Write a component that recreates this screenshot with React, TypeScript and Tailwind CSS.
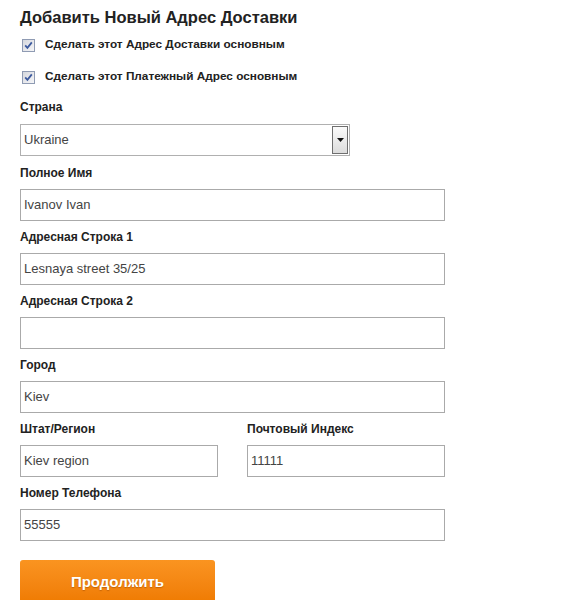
const font = { fontFamily: '"Liberation Sans", Arial, sans-serif' };

function CheckIcon() {
  return (
    <svg width="13" height="13" viewBox="0 0 13 13" className="shrink-0">
      <defs>
        <linearGradient id="cbg" x1="0" y1="0" x2="1" y2="1">
          <stop offset="0" stopColor="#d4d6dc" />
          <stop offset="1" stopColor="#f7f7f9" />
        </linearGradient>
      </defs>
      <rect x="0.5" y="0.5" width="12" height="12" fill="url(#cbg)" stroke="#8f9bb3" />
      <path d="M3.2 6.4 L5.4 8.8 L9.8 3.4" fill="none" stroke="#3d5a9e" strokeWidth="1.8" />
    </svg>
  );
}

function CheckRow({ label }: { label: string }) {
  return (
    <div className="flex h-4 items-center pl-[2px]">
      <CheckIcon />
      <span className="ml-[10px] text-[11.8px] font-bold text-[#222]">{label}</span>
    </div>
  );
}

function Field({
  label,
  value,
  width = "w-[425px]",
}: {
  label: string;
  value: string;
  width?: string;
}) {
  return (
    <div className="mb-[8px] flex flex-col">
      <div className="mb-[8px] h-4 text-[12px] font-bold leading-4 text-[#222]">{label}</div>
      <div
        className={`${width} flex h-8 items-center border border-[#aaaaaa] bg-white pl-[3px] text-[13px] text-[#444]`}
      >
        {value}
      </div>
    </div>
  );
}

export default function App() {
  return (
    <div className="min-h-[600px] bg-white pl-5 pt-[6px]" style={font}>
      <h1 className="h-[22px] text-[16.5px] font-bold leading-[22px] text-[#222]">
        Добавить Новый Адрес Доставки
      </h1>
      <div className="mt-[9px] flex flex-col gap-4">
        <CheckRow label="Сделать этот Адрес Доставки основным" />
        <CheckRow label="Сделать этот Платежный Адрес основным" />
      </div>

      <div className="mt-[14px] mb-[9px] flex flex-col">
        <div className="mb-[9px] h-4 text-[12px] font-bold leading-4 text-[#222]">Страна</div>
        <div className="flex h-8 w-[330px] items-center border border-[#b0b0b0] bg-white pl-[3px] pr-[1px] text-[13px] text-[#444]">
          <span className="flex-1">Ukraine</span>
          <div className="flex h-[28px] w-4 items-center justify-center border border-[#6f6f6f] bg-gradient-to-b from-[#fbfbfb] to-[#dcdcdc]">
            <svg width="7" height="4" viewBox="0 0 7 4">
              <path d="M0 0 H7 L3.5 4 Z" fill="#111" />
            </svg>
          </div>
        </div>
      </div>

      <Field label="Полное Имя" value="Ivanov Ivan" />
      <Field label="Адресная Строка 1" value="Lesnaya street 35/25" />
      <Field label="Адресная Строка 2" value="" />
      <Field label="Город" value="Kiev" />

      <div className="flex gap-[29px]">
        <Field label="Штат/Регион" value="Kiev region" width="w-[198px]" />
        <Field label="Почтовый Индекс" value="11111" width="w-[198px]" />
      </div>

      <Field label="Номер Телефона" value="55555" />

      <button
        className="mt-[19px] flex h-[44px] w-[195px] items-center justify-center rounded-[3px] bg-gradient-to-b from-[#fa9420] to-[#ef7a00] text-[15px] font-bold text-white"
        style={{ textShadow: "0 1px 1px rgba(150,70,0,0.5)" }}
      >
        Продолжить
      </button>
    </div>
  );
}
